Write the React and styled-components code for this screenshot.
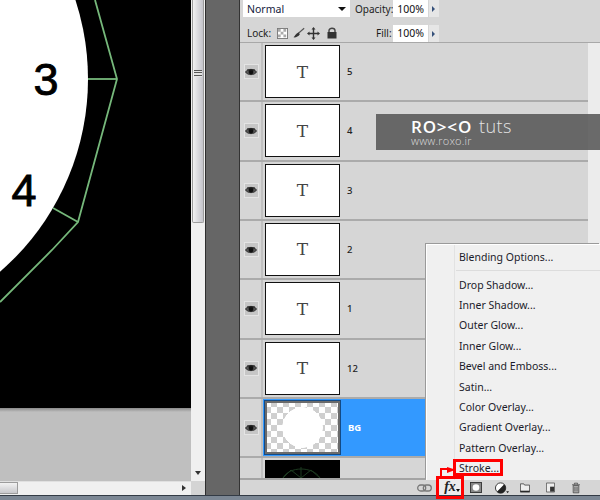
import styled, { createGlobalStyle } from "styled-components";

const GlobalStyle = createGlobalStyle`
  html, body { margin: 0; padding: 0; background: #6b7885; }
  body { width: 600px; height: 500px; overflow: hidden; }
  *, *::before, *::after { box-sizing: border-box; }
`;

const layers = [
  { name: "5" },
  { name: "4" },
  { name: "3" },
  { name: "2" },
  { name: "1" },
  { name: "12" },
];

const menuItems = [
  "Drop Shadow...",
  "Inner Shadow...",
  "Outer Glow...",
  "Inner Glow...",
  "Bevel and Emboss...",
  "Satin...",
  "Color Overlay...",
  "Gradient Overlay...",
  "Pattern Overlay...",
];

const EyeIcon = () => (
  <svg width="12" height="10" viewBox="0 0 12 10">
    <path d="M0.5 5 C2.5 1.5 9.5 1.5 11.5 5 C9.5 8.5 2.5 8.5 0.5 5Z" fill="#555" stroke="#222" strokeWidth="0.8" />
    <circle cx="6" cy="5" r="2.4" fill="#111" />
    <path d="M2 3 L10 3" stroke="#222" strokeWidth="1" />
  </svg>
);

const LockIcons = () => (
  <LockGroup>
    <IconSlot>
      <svg width="11" height="11" viewBox="0 0 12 12">
        <rect x="0.5" y="0.5" width="11" height="11" fill="#fff" stroke="#777" />
        <path d="M1 1h3v3H1zM7 1h3v3H7zM4 4h3v3H4zM1 7h3v3H1zM7 7h3v3H7z" fill="#aaa" />
      </svg>
    </IconSlot>
    <IconSlot $left={5}>
      <svg width="12" height="12" viewBox="0 0 14 13">
        <path d="M13 1 L6 7" stroke="#555" strokeWidth="1.4" />
        <path d="M6.5 6 L8 8 C6 11 3 12 0.5 11.5 C2.5 10.5 3 7 6.5 6Z" fill="#333" />
      </svg>
    </IconSlot>
    <IconSlot $left={2}>
      <svg width="13" height="13" viewBox="0 0 13 13">
        <path d="M6.5 0 L8.5 2.5 H7.2 V5.8 H10.5 V4.5 L13 6.5 L10.5 8.5 V7.2 H7.2 V10.5 H8.5 L6.5 13 L4.5 10.5 H5.8 V7.2 H2.5 V8.5 L0 6.5 L2.5 4.5 V5.8 H5.8 V2.5 H4.5Z" fill="#333" />
      </svg>
    </IconSlot>
    <IconSlot $left={7}>
      <svg width="10" height="12" viewBox="0 0 10 12">
        <path d="M2 6 V3.5 C2 0.5 8 0.5 8 3.5 V6" fill="none" stroke="#444" strokeWidth="1.4" />
        <rect x="0.5" y="5" width="9" height="6.5" fill="#333" />
      </svg>
    </IconSlot>
  </LockGroup>
);

const Clock = () => (
  <svg width="191" height="408" viewBox="0 0 191 408">
    <rect width="191" height="408" fill="#000" />
    <circle cx="-167" cy="79" r="255" fill="#fff" />
    <g fill="none" stroke="#76b87b" strokeWidth="1.8">
      <path d="M95 0 L117 79 L78 222 L52 250 L0 302" />
      <path d="M88 79 H117" />
      <path d="M53 208 L78 222" />
    </g>
    <ClockNumber x="46" y="95">3</ClockNumber>
    <ClockNumber x="24" y="206">4</ClockNumber>
  </svg>
);

const ClockThumb = () => (
  <svg width="73" height="30" viewBox="0 0 73 30">
    <g fill="none" stroke="#1d3a20" strokeWidth="1">
      <path d="M18 18 C24 6 48 6 55 18" />
      <path d="M36 7 V18 M26 10 L36 18 M46 10 L36 18 M18 18 L26 10 M55 18 L46 10" />
    </g>
  </svg>
);

const FooterIcons = () => (
  <>
    <IconSlot>
      <svg width="15" height="8" viewBox="0 0 15 8">
        <rect x="0.7" y="1" width="8" height="6" rx="3" fill="none" stroke="#777" strokeWidth="1.3" />
        <rect x="6.3" y="1" width="8" height="6" rx="3" fill="none" stroke="#777" strokeWidth="1.3" />
      </svg>
    </IconSlot>
    <FxButton>fx</FxButton>
    <IconSlot $left={9}>
      <svg width="12" height="11" viewBox="0 0 13 12">
        <rect x="0.5" y="0.5" width="12" height="11" fill="#888" stroke="#333" />
        <circle cx="6.5" cy="6" r="3.6" fill="#fff" />
      </svg>
    </IconSlot>
    <IconSlot $left={13}>
      <svg width="14" height="12" viewBox="0 0 15 12">
        <circle cx="6" cy="6" r="5.5" fill="#fff" stroke="#333" />
        <path d="M9.9 2.1 A5.5 5.5 0 0 1 2.1 9.9Z" fill="#222" />
        <path d="M12 9.5 h3 l-1.5 2Z" fill="#222" />
      </svg>
    </IconSlot>
    <IconSlot $left={11}>
      <svg width="10" height="10" viewBox="0 0 12 11">
        <path d="M0.5 0.5 H4.5 L5.5 2 H11.5 V10.5 H0.5Z" fill="#eee" stroke="#444" />
        <path d="M0.5 9.5 H11.5" stroke="#222" strokeWidth="1.5" />
      </svg>
    </IconSlot>
    <IconSlot $left={16}>
      <svg width="9" height="11" viewBox="0 0 11 12">
        <path d="M0.5 0.5 H10.5 V11.5 H0.5Z" fill="#eee" stroke="#555" />
        <path d="M5 5 H10 V11 H5Z" fill="#333" />
      </svg>
    </IconSlot>
    <IconSlot $left={17}>
      <svg width="8" height="12" viewBox="0 0 10 13">
        <path d="M0 2.5 H10 M3 2 V0.5 H7 V2" fill="none" stroke="#444" />
        <path d="M1.5 3.5 H8.5 V12.5 H1.5Z" fill="#bbb" stroke="#444" />
        <path d="M3.7 5 V11 M6.3 5 V11" stroke="#444" />
      </svg>
    </IconSlot>
  </>
);

export default function App() {
  return (
    <>
      <GlobalStyle />
      <Window>
        <Workspace>
          <DocPane>
            <CanvasArea>
              <Clock />
              <Pasteboard />
            </CanvasArea>
            <VScroll>
              <VThumb>
                <Grip />
              </VThumb>
              <ArrowDown />
            </VScroll>
            <HScroll>
              <HThumb />
              <ArrowRight />
            </HScroll>
            <ScrollCorner />
          </DocPane>
          <Gutter />
          <Panel>
            <BlendRow>
              <BlendSelect>
                Normal
                <SelectCaret />
              </BlendSelect>
              <FieldLabel>Opacity:</FieldLabel>
              <ValueBox>100%</ValueBox>
              <StepButton />
            </BlendRow>
            <LockRow>
              <FieldLabel>Lock:</FieldLabel>
              <LockIcons />
              <FillLabel>Fill:</FillLabel>
              <ValueBox>100%</ValueBox>
              <StepButton />
            </LockRow>
            <ListArea>
              <LayerList>
                {layers.map((layer) => (
                  <LayerRow key={layer.name}>
                    <EyeCell>
                      <EyeBox>
                        <EyeIcon />
                      </EyeBox>
                    </EyeCell>
                    <Thumb>T</Thumb>
                    <LayerName>{layer.name}</LayerName>
                  </LayerRow>
                ))}
                <LayerRow $active>
                  <EyeCell>
                    <EyeBox>
                      <EyeIcon />
                    </EyeBox>
                  </EyeCell>
                  <CheckerThumb />
                  <LayerName $active>BG</LayerName>
                </LayerRow>
                <LayerRow>
                  <EyeCell />
                  <BlackThumb>
                    <ClockThumb />
                  </BlackThumb>
                </LayerRow>
              </LayerList>
              <PanelScroll />
            </ListArea>
            <Footer>
              <FooterIcons />
            </Footer>
            <Watermark>
              <LogoLine>
                <Logo>RO&gt;&lt;O</Logo>
                <Tuts>tuts</Tuts>
              </LogoLine>
              <Site>www.roxo.ir</Site>
            </Watermark>
            <Menu>
              <MenuItem>Blending Options...</MenuItem>
              <MenuDivider />
              {menuItems.map((item) => (
                <MenuItem key={item}>{item}</MenuItem>
              ))}
              <MenuItem>
                <StrokeMark>Stroke...</StrokeMark>
              </MenuItem>
            </Menu>
            <Pointer>
              <svg width="18" height="10" viewBox="0 0 18 10">
                <path d="M1 10 V2 H9" fill="none" stroke="#f00" strokeWidth="2" />
                <path d="M7 0 L15 2.5 L15 3 L7 6Z" fill="#f00" />
              </svg>
            </Pointer>
          </Panel>
        </Workspace>
        <BottomEdge />
      </Window>
    </>
  );
}

const uiFont = `"Noto Sans", "Liberation Sans", sans-serif`;

const Window = styled.div`
  width: 600px;
  height: 500px;
  display: flex;
  flex-direction: column;
  font-family: ${uiFont};
`;

const Workspace = styled.div`
  display: flex;
  height: 495px;
`;

const BottomEdge = styled.div`
  flex: 1;
  border-top: 1px solid #333b45;
  background: #7c8794;
`;

const DocPane = styled.div`
  width: 205px;
  display: grid;
  grid-template-columns: 191px 14px;
  grid-template-rows: 481px 14px;
`;

const CanvasArea = styled.div`
  display: flex;
  flex-direction: column;
  overflow: hidden;
  background: #bfbfbf;

  svg {
    display: block;
    flex: none;
  }
`;

const ClockNumber = styled.text`
  font-family: "Liberation Sans", Arial, sans-serif;
  font-size: 45px;
  font-weight: 400;
  text-anchor: middle;
  fill: #000;
  stroke: #000;
  stroke-width: 0.9px;
`;

const Pasteboard = styled.div`
  flex: 1;
  background: linear-gradient(#8a8a8a, #bfbfbf 4px);
`;

const VScroll = styled.div`
  position: relative;
  background: #f0f0f0;
  display: flex;
  flex-direction: column;
  align-items: center;
`;

const VThumb = styled.div`
  width: 12px;
  height: 223px;
  border: 1px solid #9c9c9c;
  border-top: 0;
  border-radius: 0 0 2px 2px;
  background: linear-gradient(90deg, #f2f2f2, #dcdce0 45%, #c4c4ca);
  display: flex;
  justify-content: center;
  padding-top: 70px;
`;

const Grip = styled.div`
  width: 8px;
  height: 7px;
  background: repeating-linear-gradient(#555 0 1px, #e4e4e4 1px 2.5px);
`;

const ArrowDown = styled.div`
  position: absolute;
  bottom: 6px;
  left: 4px;
  border-left: 3.5px solid transparent;
  border-right: 3.5px solid transparent;
  border-top: 4px solid #333;
`;

const HScroll = styled.div`
  position: relative;
  background: #f0f0f0;
  border-top: 1px solid #e0e0e0;
`;

const HThumb = styled.div`
  width: 18px;
  height: 12px;
  border: 1px solid #9c9c9c;
  border-left: 0;
  background: linear-gradient(#f2f2f2, #c8c8cc);
`;

const ArrowRight = styled.div`
  position: absolute;
  right: 5px;
  top: 3px;
  border-top: 3.5px solid transparent;
  border-bottom: 3.5px solid transparent;
  border-left: 4px solid #333;
`;

const ScrollCorner = styled.div`
  background: #d4d4d4;
`;

const Gutter = styled.div`
  width: 35px;
  background: #666;
  border-left: 1px solid #2e2e2e;
  border-right: 1px solid #333;
`;

const Panel = styled.div`
  position: relative;
  width: 360px;
  background: #d6d6d6;
  display: flex;
  flex-direction: column;
  color: #1a1a1a;
  font-size: 10.5px;
`;

const BlendRow = styled.div`
  height: 17px;
  display: flex;
  align-items: center;
  padding-left: 3px;
`;

const BlendSelect = styled.div`
  width: 107px;
  height: 17px;
  background: #fff;
  display: flex;
  align-items: center;
  justify-content: space-between;
  padding: 0 4px;
  color: #14213d;
  margin-right: 5px;
`;

const SelectCaret = styled.div`
  border-left: 4px solid transparent;
  border-right: 4px solid transparent;
  border-top: 4px solid #111;
`;

const FieldLabel = styled.div`
  width: 38px;
  font-size: 10px;
  white-space: nowrap;
  color: #222;
`;

const ValueBox = styled.div`
  width: 35px;
  height: 17px;
  background: #fff;
  display: flex;
  align-items: center;
  justify-content: center;
  color: #111;
`;

const StepButton = styled.div`
  width: 10px;
  height: 17px;
  margin-left: 1px;
  background: #e6e6e6;
  position: relative;

  &::after {
    content: "";
    position: absolute;
    left: 3px;
    top: 6px;
    border-top: 3px solid transparent;
    border-bottom: 3px solid transparent;
    border-left: 3px solid #35507a;
  }
`;

const LockRow = styled.div`
  height: 26px;
  display: flex;
  align-items: center;
  padding: 7px 0 0 7px;
  border-bottom: 1px solid #a8a8a8;

  ${FieldLabel} {
    width: 30px;
  }
`;

const LockGroup = styled.div`
  display: flex;
  align-items: center;
`;

const IconSlot = styled.div`
  display: flex;
  flex: none;
  margin-left: ${(p) => p.$left || 0}px;
`;

const FillLabel = styled.div`
  margin-left: 39px;
  width: 17px;
  font-size: 10px;
`;

const ListArea = styled.div`
  flex: 1;
  min-height: 0;
  display: flex;
  overflow: hidden;
  border-bottom: 2px solid #a4a4a4;
`;

const LayerList = styled.div`
  flex: 1;
  min-width: 0;
`;

const PanelScroll = styled.div`
  width: 12px;
  background: #ececec;
`;

const LayerRow = styled.div`
  height: 59.33px;
  display: flex;
  align-items: flex-start;
  border-bottom: 2px solid #ababab;
  background: ${(p) => (p.$active ? "#3399ff" : "transparent")};
`;

const EyeCell = styled.div`
  width: 23px;
  height: 100%;
  flex: none;
  background: #d6d6d6;
  border-right: 2px solid #c0c0c0;
  display: flex;
  align-items: center;
  justify-content: center;
  padding-left: 1px;
`;

const EyeBox = styled.div`
  width: 15px;
  height: 15px;
  background: #c6c6c6;
  border: 1px solid #e4e4e4;
  display: flex;
  align-items: center;
  justify-content: center;
`;

const Thumb = styled.div`
  width: 75px;
  height: 53px;
  margin: 2px 0 0 2px;
  flex: none;
  background: #fff;
  border: 1px solid #111;
  display: flex;
  align-items: center;
  justify-content: center;
  font-family: "DejaVu Serif", "Liberation Serif", serif;
  font-size: 17px;
  color: #444;
`;

const CheckerThumb = styled.div`
  width: 77px;
  height: 55px;
  margin: 1px 0 0 1px;
  flex: none;
  border: 1px solid #124a86;
  outline: 2px solid #6a6a6a;
  outline-offset: -3px;
  background:
    radial-gradient(circle at 50% 50%, #fff 20px, transparent 20.5px),
    repeating-conic-gradient(#cfcfcf 0 25%, #fff 0 50%) 0 0 / 12px 12px;
`;

const BlackThumb = styled.div`
  width: 75px;
  height: 53px;
  margin: 2px 0 0 2px;
  flex: none;
  background: #000;
  display: flex;
`;

const LayerName = styled.div`
  margin: 22px 0 0 7px;
  font-size: 9.5px;
  line-height: 14px;
  font-weight: ${(p) => (p.$active ? 700 : 500)};
  color: ${(p) => (p.$active ? "#fff" : "#222")};
`;

const Footer = styled.div`
  height: 15px;
  flex: none;
  display: flex;
  align-items: center;
  padding-left: 177px;
`;

const FxButton = styled.div`
  position: relative;
  width: 22px;
  height: 15px;
  margin-left: 7px;
  background: #ececec;
  font-family: "Liberation Serif", serif;
  font-style: italic;
  font-weight: 700;
  font-size: 14px;
  line-height: 14px;
  text-align: center;
  color: #222;

  &::after {
    content: "";
    position: absolute;
    right: 1px;
    bottom: 3px;
    border-left: 2.5px solid transparent;
    border-right: 2.5px solid transparent;
    border-top: 3px solid #111;
  }
`;

const Watermark = styled.div`
  position: absolute;
  left: 136px;
  top: 114px;
  width: 224px;
  height: 36px;
  padding: 3px 0 0 35px;
  background: rgba(88, 88, 88, 0.88);
  color: #fff;
  font-family: "Open Sans", sans-serif;
`;

const LogoLine = styled.div`
  display: flex;
  align-items: baseline;
  gap: 7px;
  height: 18px;
`;

const Logo = styled.div`
  font-size: 17px;
  font-weight: 600;
  line-height: 18px;
  letter-spacing: 0.8px;
`;

const Tuts = styled.div`
  font-size: 18px;
  font-weight: 300;
  line-height: 18px;
  letter-spacing: 0.4px;
  color: #e4e4e4;
`;

const Site = styled.div`
  font-size: 11px;
  font-weight: 300;
  line-height: 12px;
  letter-spacing: 0.2px;
  color: #ddd;
`;

const Menu = styled.div`
  position: absolute;
  left: 186px;
  top: 244px;
  width: 174px;
  height: 236px;
  padding: 2px 0 0 28px;
  background: linear-gradient(90deg, #f0f0f0 27px, #e2e2e2 27px, #e2e2e2 28px, #f0f0f0 28px);
  border-top: 1px solid #fff;
  border-left: 1px solid #fff;
  box-shadow: -1px -1px 0 #9a9a9a;
`;

const MenuItem = styled.div`
  height: 20.4px;
  display: flex;
  align-items: center;
  padding-left: 4px;
  font-size: 10.5px;
  color: #1b1b2a;
  white-space: nowrap;
`;

const MenuDivider = styled.div`
  height: 1px;
  margin: 3px 0 3px 1px;
  background: #dcdcdc;
`;

const StrokeMark = styled.div`
  position: relative;

  &::after {
    content: "";
    position: absolute;
    left: -6px;
    top: -2px;
    width: 50px;
    height: 17px;
    border: 3px solid #f00;
  }
`;

const Pointer = styled.div`
  position: absolute;
  left: 200px;
  top: 467px;
  line-height: 0;

  &::after {
    content: "";
    position: absolute;
    left: -4px;
    top: 9px;
    width: 28px;
    height: 23px;
    border: 3px solid #f00;
  }
`;
